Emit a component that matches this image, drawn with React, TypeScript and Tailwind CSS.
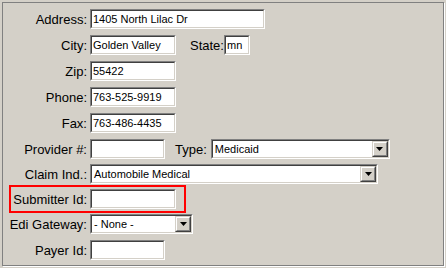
import React from 'react';

function Sunken({ width, children }: { width: string; children?: React.ReactNode }) {
  return (
    <div className={`${width} h-[20px] border border-t-[#808080] border-l-[#808080] border-b-white border-r-white`}>
      <div className="h-full w-full border border-t-[#404040] border-l-[#404040] border-b-[#d4d0c8] border-r-[#d4d0c8] bg-white flex items-center">
        {children}
      </div>
    </div>
  );
}

function TextBox({ width, value }: { width: string; value?: string }) {
  return (
    <Sunken width={width}>
      <span className="pl-[1px] text-[11px] leading-none text-black whitespace-nowrap">{value}</span>
    </Sunken>
  );
}

function DropButton() {
  return (
    <div className="h-full w-[16px] border border-t-[#d4d0c8] border-l-[#d4d0c8] border-b-[#404040] border-r-[#404040]">
      <div className="h-full w-full border border-t-white border-l-white border-b-[#808080] border-r-[#808080] bg-[#d4d0c8] flex items-center justify-center">
        <svg width="7" height="4" viewBox="0 0 7 4">
          <path d="M0 0h7L3.5 4z" fill="#000" />
        </svg>
      </div>
    </div>
  );
}

function Select({ width, value }: { width: string; value: string }) {
  return (
    <Sunken width={width}>
      <span className="flex-1 pl-[2px] text-[11px] leading-none text-black whitespace-nowrap">{value}</span>
      <DropButton />
    </Sunken>
  );
}

function Label({ children }: { children: React.ReactNode }) {
  return <div className="w-[84px] shrink-0 text-right pr-0 mr-[3px] text-[13px] leading-none">{children}</div>;
}

export default function App() {
  return (
    <div className="w-[446px] h-[268px] bg-[#d4d0c8] p-[2px] font-['Liberation_Sans',Arial,sans-serif] text-black">
      <div className="h-[264px] border border-[#808080] shadow-[1px_1px_0_#ffffff] pt-[6px] flex flex-col">
        <div className="h-[26px] flex items-start">
          <div className="flex items-center h-[20px]">
            <Label>Address:</Label>
            <TextBox width="w-[175px]" value="1405 North Lilac Dr" />
          </div>
        </div>
        <div className="h-[26px] flex items-start">
          <div className="flex items-center h-[20px]">
            <Label>City:</Label>
            <TextBox width="w-[86px]" value="Golden Valley" />
            <span className="ml-[14px] text-[13px] leading-none">State:</span>
            <TextBox width="w-[26px]" value="mn" />
          </div>
        </div>
        <div className="h-[26px] flex items-start">
          <div className="flex items-center h-[20px]">
            <Label>Zip:</Label>
            <TextBox width="w-[86px]" value="55422" />
          </div>
        </div>
        <div className="h-[26px] flex items-start">
          <div className="flex items-center h-[20px]">
            <Label>Phone:</Label>
            <TextBox width="w-[86px]" value="763-525-9919" />
          </div>
        </div>
        <div className="h-[26px] flex items-start">
          <div className="flex items-center h-[20px]">
            <Label>Fax:</Label>
            <TextBox width="w-[86px]" value="763-486-4435" />
          </div>
        </div>
        <div className="h-[25px] flex items-start">
          <div className="flex items-center h-[20px]">
            <Label>Provider #:</Label>
            <TextBox width="w-[75px]" value="" />
            <span className="ml-[10px] mr-[4px] text-[13px] leading-none">Type:</span>
            <Select width="w-[179px]" value="Medicaid" />
          </div>
        </div>
        <div className="h-[25px] flex items-start">
          <div className="flex items-center h-[20px]">
            <Label>Claim Ind.:</Label>
            <Select width="w-[288px]" value="Automobile Medical" />
          </div>
        </div>
        <div className="h-[25px] flex items-start">
          <div className="relative flex items-center h-[20px]">
            <Label>Submitter Id:</Label>
            <TextBox width="w-[86px]" value="" />
            <div className="pointer-events-none absolute left-[6px] top-[-4px] w-[177px] h-[28px] border-2 border-[#ff0000]" />
          </div>
        </div>
        <div className="h-[26px] flex items-start">
          <div className="flex items-center h-[20px]">
            <Label>Edi Gateway:</Label>
            <Select width="w-[103px]" value="- None -" />
          </div>
        </div>
        <div className="h-[20px] flex items-start">
          <div className="flex items-center h-[20px]">
            <Label>Payer Id:</Label>
            <TextBox width="w-[75px]" value="" />
          </div>
        </div>
      </div>
    </div>
  );
}
